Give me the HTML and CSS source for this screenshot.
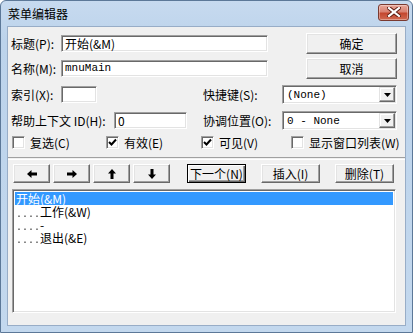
FILE: index.html
```html
<!DOCTYPE html>
<html lang="zh-CN">
<head>
    <meta charset="UTF-8">
    <title>菜单编辑器</title>
    <link rel="stylesheet" href="styles.css">
</head>
<body>
    <div class="window">
        <div class="titlebar">
            <span class="title">菜单编辑器</span>
            <div class="close-btn">
                <svg width="14" height="10" viewBox="0 0 14 10">
                    <path d="M2 1 L12 9 M12 1 L2 9" stroke="#5a1a10" stroke-width="4" stroke-linecap="square"/>
                    <path d="M2 1 L12 9 M12 1 L2 9" stroke="#fff" stroke-width="2.2" stroke-linecap="square"/>
                </svg>
            </div>
        </div>
        <div class="client">
            <div class="row row-1">
                <span class="lbl lbl-short">标题(P):</span>
                <div class="field field-wide">开始(&amp;M)</div>
                <div class="btn btn-cmd">确定</div>
            </div>
            <div class="row row-2">
                <span class="lbl lbl-short">名称(M):</span>
                <div class="field field-wide mono">mnuMain</div>
                <div class="btn btn-cmd">取消</div>
            </div>
            <div class="row row-3">
                <div class="half">
                    <span class="lbl lbl-short">索引(X):</span>
                    <div class="field field-index"></div>
                </div>
                <div class="half-right">
                    <span class="lbl lbl-right">快捷键(S):</span>
                    <div class="combo"><span class="combo-text mono">(None)</span><div class="combo-btn"><svg width="7" height="4" viewBox="0 0 7 4"><path d="M0 0 H7 L3.5 4 Z" fill="#000"/></svg></div></div>
                </div>
            </div>
            <div class="row row-4">
                <div class="half">
                    <span class="lbl lbl-help">帮助上下文 ID(H):</span>
                    <div class="field field-help">0</div>
                </div>
                <div class="half-right">
                    <span class="lbl lbl-right">协调位置(O):</span>
                    <div class="combo"><span class="combo-text mono">0 - None</span><div class="combo-btn"><svg width="7" height="4" viewBox="0 0 7 4"><path d="M0 0 H7 L3.5 4 Z" fill="#000"/></svg></div></div>
                </div>
            </div>
            <div class="checks">
                <div class="check"><span class="box"></span>复选(C)</div>
                <div class="check"><span class="box"><svg width="9" height="9" viewBox="0 0 9 9"><path d="M1 4 L3.5 6.5 L8 1.5" stroke="#000" stroke-width="2" fill="none"/></svg></span>有效(E)</div>
                <div class="check"><span class="box"><svg width="9" height="9" viewBox="0 0 9 9"><path d="M1 4 L3.5 6.5 L8 1.5" stroke="#000" stroke-width="2" fill="none"/></svg></span>可见(V)</div>
                <div class="check"><span class="box"></span>显示窗口列表(W)</div>
            </div>
            <div class="separator"></div>
            <div class="toolbar">
                <div class="btn btn-arrow"><svg width="10" height="8" viewBox="0 0 10 8"><path d="M0 4 L4.5 0 V2.5 H10 V5.5 H4.5 V8 Z" fill="#000"/></svg></div>
                <div class="btn btn-arrow"><svg width="10" height="8" viewBox="0 0 10 8"><path d="M10 4 L5.5 0 V2.5 H0 V5.5 H5.5 V8 Z" fill="#000"/></svg></div>
                <div class="btn btn-arrow"><svg width="8" height="10" viewBox="0 0 8 10"><path d="M4 0 L8 4.5 H5.5 V10 H2.5 V4.5 H0 Z" fill="#000"/></svg></div>
                <div class="btn btn-arrow"><svg width="8" height="10" viewBox="0 0 8 10"><path d="M4 10 L8 5.5 H5.5 V0 H2.5 V5.5 H0 Z" fill="#000"/></svg></div>
                <div class="btn btn-act btn-default">下一个(N)</div>
                <div class="btn btn-act">插入(I)</div>
                <div class="btn btn-act">删除(T)</div>
            </div>
            <div class="listbox">
                <div class="item selected">开始(&amp;M)</div>
                <div class="item"><span class="dots">....</span><span class="caption">工作(&amp;W)</span></div>
                <div class="item"><span class="dots">....</span><span class="caption">-</span></div>
                <div class="item"><span class="dots">....</span><span class="caption">退出(&amp;E)</span></div>
            </div>
        </div>
    </div>
</body>
</html>
```

FILE: styles.css
```css
html, body {
    margin: 0;
    padding: 0;
}
body {
    font-family: 'Noto Sans CJK SC', 'Liberation Sans', sans-serif;
    font-size: 12px;
    color: #000;
    background: #fff;
}
.window {
    width: 413px;
    height: 333px;
    box-sizing: border-box;
    border: 1px solid #5c7898;
    border-radius: 6px 6px 0 0;
    background: linear-gradient(180deg, #c7daef 0px, #bcd3eb 40px, #c3d8ee 100%);
    display: flex;
    flex-direction: column;
}
.titlebar {
    height: 25px;
    display: flex;
    align-items: center;
    padding: 0 3px 0 7px;
    flex-shrink: 0;
}
.title {
    font-size: 12px;
    line-height: 14px;
}
.close-btn {
    margin-left: auto;
    margin-top: -3px;
    width: 31px;
    height: 17px;
    box-sizing: border-box;
    border: 1px solid #7a3a30;
    border-radius: 3px;
    background: linear-gradient(180deg, #e8a699 0%, #d98272 45%, #c4472f 55%, #d06a52 100%);
    box-shadow: inset 0 0 0 1px rgba(255, 255, 255, 0.35);
    display: flex;
    align-items: center;
    justify-content: center;
}
.client {
    flex: 1;
    margin: 0 6px 6px 6px;
    border: 1px solid #98adc7;
    background: #f0f0f0;
    padding: 0 8px 0 3px;
    display: flex;
    flex-direction: column;
}
.row {
    display: flex;
    align-items: center;
}
.row-1 {
    margin-top: 6px;
    height: 21px;
}
.row-2 {
    margin-top: 4px;
    height: 21px;
}
.row-3 {
    margin-top: 6px;
    height: 19px;
}
.row-4 {
    margin-top: 7px;
    height: 19px;
}
.half {
    width: 192px;
    display: flex;
    align-items: center;
}
.half-right {
    flex: 1;
    display: flex;
    align-items: center;
}
.lbl {
    white-space: nowrap;
    line-height: 14px;
}
.lbl-short {
    width: 50px;
}
.lbl-help {
    width: 103px;
}
.lbl-right {
    width: 79px;
}
.field {
    height: 17px;
    box-sizing: border-box;
    background: #fff;
    border: 1px solid;
    border-color: #a0a0a0 #fff #fff #a0a0a0;
    box-shadow: inset 1px 1px 0 #696969, inset -1px -1px 0 #e3e3e3;
    padding: 0 3px;
    line-height: 15px;
    white-space: nowrap;
}
.mono {
    font-family: 'Liberation Mono', 'Noto Sans CJK SC', monospace;
    font-size: 11px;
}
.field-wide {
    width: 207px;
}
.field-index {
    width: 36px;
}
.field-help {
    width: 73px;
}
.btn {
    box-sizing: border-box;
    background: #f0f0f0;
    border: 1px solid;
    border-color: #fff #696969 #696969 #fff;
    box-shadow: inset -1px -1px 0 #a0a0a0, inset 1px 1px 0 #e3e3e3;
    display: flex;
    align-items: center;
    justify-content: center;
    white-space: nowrap;
    line-height: 14px;
}
.btn-cmd {
    margin-left: auto;
    width: 91px;
    height: 21px;
}
.combo {
    width: 115px;
    height: 19px;
    box-sizing: border-box;
    background: #fff;
    border: 1px solid;
    border-color: #a0a0a0 #fff #fff #a0a0a0;
    box-shadow: inset 1px 1px 0 #696969, inset -1px -1px 0 #e3e3e3;
    display: flex;
    align-items: center;
    padding: 1px 1px 1px 4px;
}
.combo-text {
    flex: 1;
    line-height: 14px;
}
.combo-btn {
    width: 16px;
    height: 15px;
    box-sizing: border-box;
    background: #f0f0f0;
    border: 1px solid;
    border-color: #e3e3e3 #696969 #696969 #e3e3e3;
    box-shadow: inset -1px -1px 0 #a0a0a0, inset 1px 1px 0 #fff;
    display: flex;
    align-items: center;
    justify-content: center;
}
.checks {
    margin-top: 6px;
    height: 13px;
    display: grid;
    grid-template-columns: 94px 95px 90px auto;
    padding-left: 1px;
}
.check {
    display: flex;
    align-items: center;
    gap: 5px;
    white-space: nowrap;
    line-height: 13px;
}
.box {
    width: 13px;
    height: 13px;
    box-sizing: border-box;
    background: #fff;
    border: 1px solid;
    border-color: #a0a0a0 #fff #fff #a0a0a0;
    box-shadow: inset 1px 1px 0 #696969, inset -1px -1px 0 #e3e3e3;
    display: flex;
    align-items: center;
    justify-content: center;
}
.separator {
    margin: 8px -8px 0 -3px;
    height: 1px;
    border-top: 1px solid #a0a0a0;
    border-bottom: 1px solid #fff;
}
.toolbar {
    margin-top: 4px;
    height: 19px;
    display: flex;
    padding-left: 2px;
}
.btn-arrow {
    width: 37px;
    height: 19px;
    margin-right: 3px;
}
.btn-act {
    width: 59px;
    height: 19px;
    margin-left: 15px;
}
.btn-act.btn-default {
    margin-left: 14px;
    border-color: #000;
    box-shadow: inset 1px 1px 0 #fff, inset -1px -1px 0 #696969, inset -2px -2px 0 #a0a0a0;
}
.listbox {
    margin: 6px 1px 0 1px;
    height: 124px;
    box-sizing: border-box;
    background: #fff;
    border: 1px solid;
    border-color: #a0a0a0 #fff #fff #a0a0a0;
    box-shadow: inset 1px 1px 0 #696969, inset -1px -1px 0 #e3e3e3;
    padding: 2px 2px;
}
.item {
    height: 13px;
    line-height: 13px;
    padding-left: 1px;
    white-space: nowrap;
    display: flex;
    align-items: baseline;
}
.item.selected {
    background: #3399ff;
    color: #fff;
}
.dots {
    width: 24px;
    flex-shrink: 0;
    overflow: hidden;
    font-family: 'Liberation Mono', monospace;
    font-size: 10px;
    color: #333;
    will-change: transform;
}
.caption {
    flex-shrink: 0;
}
```
